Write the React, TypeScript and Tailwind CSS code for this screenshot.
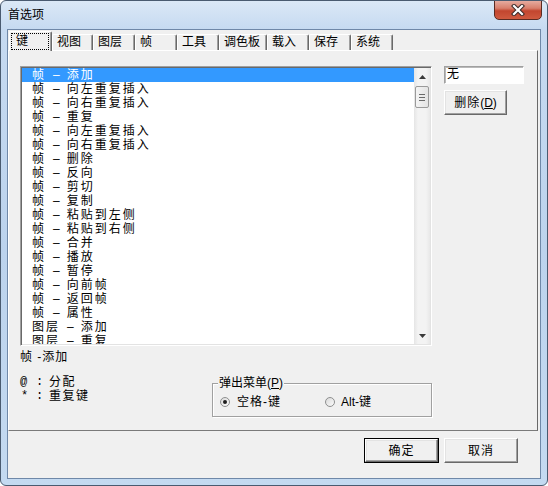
import React from "react";

const rows: [string, string][] = [
  ["帧", "添加"],
  ["帧", "向左重复插入"],
  ["帧", "向右重复插入"],
  ["帧", "重复"],
  ["帧", "向左重复插入"],
  ["帧", "向右重复插入"],
  ["帧", "删除"],
  ["帧", "反向"],
  ["帧", "剪切"],
  ["帧", "复制"],
  ["帧", "粘贴到左侧"],
  ["帧", "粘贴到右侧"],
  ["帧", "合并"],
  ["帧", "播放"],
  ["帧", "暂停"],
  ["帧", "向前帧"],
  ["帧", "返回帧"],
  ["帧", "属性"],
  ["图层", "添加"],
  ["图层", "重复"],
];

const tabs: { label: string; w: string }[] = [
  { label: "视图", w: "w-[41px]" },
  { label: "图层", w: "w-[42px]" },
  { label: "帧", w: "w-[42px]" },
  { label: "工具", w: "w-[42px]" },
  { label: "调色板", w: "w-[48px]" },
  { label: "载入", w: "w-[42px]" },
  { label: "保存", w: "w-[42px]" },
  { label: "系统", w: "w-[42px]" },
];

function Raised({ children, className }: { children: React.ReactNode; className: string }) {
  return (
    <div
      className={`flex items-center justify-center bg-[#f0f0f0] border border-t-white border-l-white border-r-[#696969] border-b-[#696969] shadow-[inset_-1px_-1px_0_#a0a0a0,inset_1px_1px_0_#e3e3e3] ${className}`}
    >
      {children}
    </div>
  );
}

function Tri({ down }: { down?: boolean }) {
  return (
    <svg width="7" height="4" viewBox="0 0 7 4">
      <polygon points={down ? "0,0 7,0 3.5,4" : "3.5,0 7,4 0,4"} fill="#3a3a3a" />
    </svg>
  );
}

function Radio({ checked }: { checked?: boolean }) {
  return (
    <div className="w-[10px] h-[10px] rounded-full border border-[#8e8f8f] bg-[linear-gradient(135deg,#d9d9d9,#fbfbfb)] flex items-center justify-center">
      {checked && <div className="w-[4px] h-[4px] rounded-full bg-[#1e1e1e]" />}
    </div>
  );
}

export default function App() {
  return (
    <div className="w-[548px] h-[486px] font-['Liberation_Sans','Noto_Sans_CJK_SC',sans-serif] text-[12px] text-black">
      <div className="relative w-[548px] h-[486px] rounded-[6px] border border-[#4a5b70] bg-[linear-gradient(to_bottom,#dbe8f6_0px,#c6daf1_28px,#bcd3ed_250px,#c4daf1_486px)] flex flex-col overflow-hidden">
        {/* title bar */}
        <div className="h-[28px] flex items-center pl-[7px] pb-[1px] leading-[14px]">首选项</div>
        {/* close button */}
        <div className="absolute top-[-1px] right-[5px] w-[48px] h-[20px] rounded-b-[5px] border border-[#5a2b22] bg-[linear-gradient(to_bottom,#e6ab9f_0%,#d87f6c_40%,#c2462f_55%,#cf5a3f_100%)] flex items-center justify-center">
          <svg width="14" height="12" viewBox="0 0 14 12">
            <path d="M3 2 L11 10 M11 2 L3 10" stroke="#3b2a28" strokeWidth="4.2" strokeLinecap="square" />
            <path d="M3 2 L11 10 M11 2 L3 10" stroke="#ffffff" strokeWidth="2.2" strokeLinecap="square" />
          </svg>
        </div>

        {/* client area */}
        <div className="mx-[6px] h-[450px] border border-[#6f88a8] bg-[#f0f0f0] flex flex-col">
          {/* tabs */}
          <div className="h-[20px] flex items-end pl-[1px]">
            <div className="relative z-10 w-[43px] h-[20px] -mb-[1px] bg-[#f0f0f0] border-t border-l border-t-white border-l-white border-r border-r-[#696969] shadow-[inset_-1px_0_0_#a0a0a0] rounded-t-[2px] p-[1px] pr-[2px]">
              <div className="h-full border border-dotted border-black pl-[4px] leading-[15px]">键</div>
            </div>
            {tabs.map((t) => (
              <div
                key={t.label}
                className={`${t.w} h-[16px] border-t border-l border-t-white border-l-white border-r border-r-[#696969] shadow-[inset_-1px_0_0_#a0a0a0] rounded-t-[2px] pl-[4px] leading-[15px] whitespace-nowrap`}
              >
                {t.label}
              </div>
            ))}
          </div>

          {/* panel */}
          <div className="w-[530px] h-[381px] border border-t-white border-l-white border-r-[#696969] border-b-[#7a7a7a] pl-[11px] pt-[15px]">
            <div className="flex">
              {/* list box */}
              <div className="w-[412px] h-[280px] bg-white border border-t-[#a0a0a0] border-l-[#a0a0a0] border-r-white border-b-white shadow-[inset_1px_1px_0_#696969,inset_-1px_-1px_0_#e3e3e3] p-[1px] flex">
                <div className="flex-1 overflow-hidden">
                  {rows.map(([p, a], i) => (
                    <div
                      key={i}
                      className={`h-[14px] leading-[14px] pl-[10px] whitespace-nowrap flex tracking-[2px] ${
                        i === 0 ? "bg-[#3399ff] text-white" : ""
                      }`}
                    >
                      <span>{p}</span>
                      <span className="ml-[7px] tracking-normal">–</span>
                      <span className="ml-[7px]">{a}</span>
                    </div>
                  ))}
                </div>
                {/* scrollbar */}
                <div className="w-[16px] flex flex-col bg-[linear-gradient(to_right,#e5e5e5,#f3f3f3_25%,#f3f3f3_75%,#e8e8e8)]">
                  <div className="h-[17px] flex items-center justify-center">
                    <Tri />
                  </div>
                  <div className="mt-[1px] h-[22px] mx-[1px] rounded-[2px] border border-[#9a9a9a] bg-[linear-gradient(to_right,#f4f4f4,#e4e4e4)] flex flex-col items-center justify-center gap-[2px]">
                    <div className="w-[6px] h-[1px] bg-[#6a6a6a]" />
                    <div className="w-[6px] h-[1px] bg-[#6a6a6a]" />
                    <div className="w-[6px] h-[1px] bg-[#6a6a6a]" />
                  </div>
                  <div className="flex-1" />
                  <div className="h-[17px] flex items-center justify-center">
                    <Tri down />
                  </div>
                </div>
              </div>

              {/* right column */}
              <div className="ml-[12px] flex flex-col">
                <div className="w-[80px] h-[18px] bg-white border border-t-[#a0a0a0] border-l-[#a0a0a0] border-r-white border-b-white shadow-[inset_1px_1px_0_#b9b9b9] pl-[2px] leading-[15px]">
                  无
                </div>
                <Raised className="mt-[6px] w-[63px] h-[25px]">
                  <span className="tracking-[1px]">删除</span>
                  <span>
                    (<span className="underline underline-offset-1">D</span>)
                  </span>
                </Raised>
              </div>
            </div>

            <div className="mt-[4px] h-[14px] leading-[14px] tracking-[1px]">帧 -添加</div>

            <div className="mt-[11px] flex">
              <div className="w-[192px] leading-[14px]">
                <div className="flex h-[14px]">
                  <span className="w-[16px] font-['Liberation_Mono',monospace]">@</span>
                  <span className="w-[13px] font-['Liberation_Mono',monospace]">:</span>
                  <span className="tracking-[1.5px]">分配</span>
                </div>
                <div className="flex h-[14px]">
                  <span className="w-[16px] pl-[1px] font-['Liberation_Mono',monospace]">*</span>
                  <span className="w-[13px] font-['Liberation_Mono',monospace]">:</span>
                  <span className="tracking-[1.5px]">重复键</span>
                </div>
              </div>
              <div className="relative w-[220px] mt-[8px] h-[34px] border border-[#a0a0a0] shadow-[inset_1px_1px_0_#fff,1px_1px_0_#fff]">
                <div className="absolute top-[-8px] left-[5px] px-[1px] bg-[#f0f0f0] leading-[14px] whitespace-nowrap">
                  弹出菜单(<span className="underline underline-offset-1">P</span>)
                </div>
                <div className="pt-[11px] pl-[7px] flex items-center h-[14px] box-content">
                  <div className="w-[105px] flex items-center">
                    <Radio checked />
                    <span className="ml-[7px] tracking-[1px] leading-[14px]">空格-键</span>
                  </div>
                  <div className="flex items-center">
                    <Radio />
                    <span className="ml-[6px] leading-[14px]">Alt-键</span>
                  </div>
                </div>
              </div>
            </div>
          </div>

          {/* bottom buttons */}
          <div className="flex justify-end gap-[5px] pr-[22px] pt-[7px]">
            <div className="w-[75px] h-[25px] border border-black">
              <Raised className="w-full h-full">
                <span className="tracking-[1px]">确定</span>
              </Raised>
            </div>
            <Raised className="w-[74px] h-[25px]">
              <span className="tracking-[1px]">取消</span>
            </Raised>
          </div>
        </div>
      </div>
    </div>
  );
}
